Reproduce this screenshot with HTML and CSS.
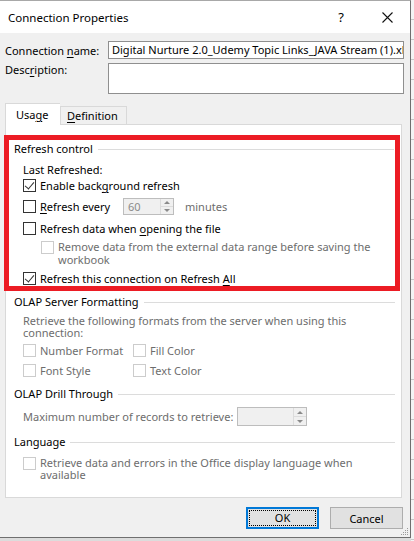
FILE: index.html
```html
<!DOCTYPE html>
<html lang="en">
<head>
    <meta charset="UTF-8">
    <title>Connection Properties</title>
    <link rel="stylesheet" href="styles.css">
</head>
<body>

<div class="screen">
    <div class="dialog">
        <div class="titlebar">
            <span class="title">Connection Properties</span>
            <span class="title-btn help">?</span>
            <span class="title-btn close">
                <svg width="11" height="11" viewBox="0 0 11 11">
                    <path d="M0.5 0.5 L10.5 10.5 M10.5 0.5 L0.5 10.5" stroke="#111" stroke-width="1.1" fill="none"/>
                </svg>
            </span>
        </div>

        <div class="body">
            <div class="field-row name-row">
                <label class="field-label">Connection <u>n</u>ame:</label>
                <div class="textbox">Digital Nurture 2.0_Udemy Topic Links_JAVA Stream (1).xlsx</div>
            </div>
            <div class="field-row desc-row">
                <label class="field-label">Desc<u>r</u>iption:</label>
                <div class="textarea"></div>
            </div>

            <div class="tabs">
                <div class="tab active">Usa<u>g</u>e</div>
                <div class="tab"><u>D</u>efinition</div>
            </div>

            <div class="panel">
                <!-- refresh options, boxed in red -->
                <div class="highlight">
                    <div class="group-title first"><span>Refresh control</span></div>
                    <div class="sub">
                        <div class="note last-refreshed">Last Refreshed:</div>
                        <div class="row r-bg">
                            <span class="check checked"></span>
                            <span>Enable back<u>g</u>round refresh</span>
                        </div>
                        <div class="row r-every">
                            <span class="check"></span>
                            <span class="every-label"><u>R</u>efresh every</span>
                            <div class="spinner small">
                                <span class="spin-value">60</span>
                                <span class="spin-arrows"><i class="up"></i><i class="down"></i></span>
                            </div>
                            <span class="muted minutes">minutes</span>
                        </div>
                        <div class="row r-open">
                            <span class="check"></span>
                            <span>Refresh data when <u>o</u>pening the file</span>
                        </div>
                        <div class="row wrap r-remove muted">
                            <span class="check disabled"></span>
                            <span>Remove data from the external data range before saving the<br>workbook</span>
                        </div>
                        <div class="row r-all">
                            <span class="check checked"></span>
                            <span>Refresh this connection on Refresh <u>A</u>ll</span>
                        </div>
                    </div>
                </div>

                <div class="group olap">
                    <div class="group-title"><span>OLAP Server Formatting</span></div>
                    <div class="sub">
                        <div class="note muted olap-note">Retrieve the following formats from the server when using this<br>connection:</div>
                        <div class="format-grid muted">
                            <div class="row"><span class="check disabled"></span><span>Number Format</span></div>
                            <div class="row"><span class="check disabled"></span><span>Fill Color</span></div>
                            <div class="row"><span class="check disabled"></span><span>Font Style</span></div>
                            <div class="row"><span class="check disabled"></span><span>Text Color</span></div>
                        </div>
                    </div>
                </div>

                <div class="group drill">
                    <div class="group-title"><span>OLAP Drill Through</span></div>
                    <div class="sub">
                        <div class="row r-max muted">
                            <span class="max-label">Maximum number of records to retrieve:</span>
                            <div class="spinner large">
                                <span class="spin-value"></span>
                                <span class="spin-arrows"><i class="up"></i><i class="down"></i></span>
                            </div>
                        </div>
                    </div>
                </div>

                <div class="group language">
                    <div class="group-title"><span>Language</span></div>
                    <div class="sub">
                        <div class="row wrap r-lang muted">
                            <span class="check disabled"></span>
                            <span>Retrieve data and errors in the Office display language when<br>available</span>
                        </div>
                    </div>
                </div>
            </div>

            <div class="buttons">
                <button class="btn default"><span>OK</span></button>
                <button class="btn">Cancel</button>
            </div>
        </div>

        <svg class="grip" width="8" height="8" viewBox="0 0 8 8">
            <rect x="6" y="0" width="1" height="1" fill="#9a9a9a"/>
            <rect x="4" y="2" width="1" height="1" fill="#9a9a9a"/>
            <rect x="6" y="2" width="1" height="1" fill="#9a9a9a"/>
            <rect x="2" y="4" width="1" height="1" fill="#9a9a9a"/>
            <rect x="4" y="4" width="1" height="1" fill="#9a9a9a"/>
            <rect x="6" y="4" width="1" height="1" fill="#9a9a9a"/>
            <rect x="0" y="6" width="1" height="1" fill="#9a9a9a"/>
            <rect x="2" y="6" width="1" height="1" fill="#9a9a9a"/>
            <rect x="4" y="6" width="1" height="1" fill="#9a9a9a"/>
            <rect x="6" y="6" width="1" height="1" fill="#9a9a9a"/>
        </svg>
    </div>
    <div class="sheet"></div>
</div>

</body>
</html>
```

FILE: styles.css
```css
* {
    box-sizing: border-box;
}

body {
    margin: 0;
    font-family: "Noto Sans", "Open Sans", sans-serif;
    font-size: 11px;
    color: #000;
}

u {
    text-decoration-thickness: 1px;
    text-underline-offset: 2px;
}

.screen {
    display: flex;
    width: 414px;
    height: 541px;
    background: #dcdcdc;
    overflow: hidden;
}

.dialog {
    position: relative;
    width: 411px;
    height: 538px;
    flex: none;
    background: #f0f0f0;
    border-top: 1px solid #a8a8a8;
    border-right: 1px solid #6f6f6f;
    border-bottom: 1px solid #6f6f6f;
}

.sheet {
    flex: 1;
    background: repeating-linear-gradient(to bottom, #f4f4f4 0 19px, #c8c8c8 19px 20px);
}

/* title bar */
.titlebar {
    height: 32px;
    background: #fff;
    display: flex;
    align-items: center;
}

.title {
    flex: 1;
    padding-left: 8px;
    font-size: 11.5px;
}

.title-btn {
    width: 46px;
    height: 32px;
    display: flex;
    align-items: center;
    justify-content: center;
}

.help {
    font-size: 13px;
    margin-right: 0;
}

/* connection fields */
.body {
    padding: 0 6px 0 5px;
}

.field-row {
    display: flex;
}

.field-label {
    width: 103px;
    flex: none;
}

.name-row {
    margin-top: 8px;
    height: 18px;
    align-items: center;
}

.textbox {
    flex: 1;
    height: 18px;
    background: #fff;
    border: 1px solid #8f8f8f;
    padding: 0 3px;
    line-height: 16px;
    white-space: nowrap;
    overflow: hidden;
}

.desc-row {
    margin-top: 4px;
}

.desc-row .field-label {
    line-height: 14px;
}

.textarea {
    flex: 1;
    height: 31px;
    background: #fff;
    border: 1px solid #8f8f8f;
}

/* tabs */
.tabs {
    margin-top: 9px;
    height: 21px;
    display: flex;
    align-items: flex-end;
}

.tab {
    height: 18px;
    padding: 0 7px 0 7px;
    border: 1px solid #d9d9d9;
    border-bottom: none;
    line-height: 18px;
    background: #f0f0f0;
}

.tab.active {
    position: relative;
    z-index: 1;
    width: 55px;
    height: 22px;
    margin-bottom: -1px;
    padding-left: 10px;
    background: #fff;
    line-height: 21px;
    border-right: none;
}

.tab.active + .tab {
    width: 67px;
    padding-left: 6px;
}

.panel {
    height: 374px;
    margin-right: 2px;
    background: #fff;
    border: 1px solid #d9d9d9;
}

/* group headers with the rule after the caption */
.group-title {
    display: flex;
    align-items: center;
    height: 15px;
    line-height: 15px;
}

.group-title::after {
    content: "";
    flex: 1;
    height: 1px;
    margin-left: 5px;
    margin-top: 1px;
    background: #dcdcdc;
}

.sub {
    margin-left: 9px;
}

.note {
    line-height: 15px;
}

.muted {
    color: #6d6d6d;
}

.row {
    display: flex;
    align-items: center;
    height: 15px;
    line-height: 15px;
    white-space: nowrap;
}

.row.wrap {
    align-items: flex-start;
    height: auto;
}

.check {
    position: relative;
    width: 13px;
    height: 13px;
    flex: none;
    margin-right: 4px;
    background: #fff;
    border: 1px solid #333;
}

.check.disabled {
    border-color: #cccccc;
}

.check.checked::after {
    content: "";
    position: absolute;
    left: 3px;
    top: 0px;
    width: 4px;
    height: 8px;
    border-right: 1px solid #333;
    border-bottom: 1px solid #333;
    transform: rotate(40deg);
}

/* refresh control box */
.highlight {
    margin: 10px 1px 0 -2px;
    height: 156px;
    border: 5px solid #ec1c24;
    padding: 0 1px 0 5px;
}

.group-title.first {
    margin-top: 1px;
}

.last-refreshed {
    margin-top: 6px;
}

.r-bg {
    margin-top: 1px;
}

.r-every {
    margin-top: 5px;
    height: 17px;
}

.every-label {
    width: 83px;
}

.spinner {
    display: flex;
    background: #f0f0f0;
    border: 1px solid #bdbdbd;
}

.spinner.small {
    width: 51px;
    height: 17px;
}

.spinner.large {
    width: 70px;
    height: 19px;
}

.spin-value {
    flex: 1;
    padding-left: 4px;
    color: #8a8a8a;
    line-height: 15px;
}

.spin-arrows {
    width: 13px;
    display: flex;
    flex-direction: column;
    border-left: 1px solid #dcdcdc;
}

.spin-arrows i {
    flex: 1;
    display: flex;
    align-items: center;
    justify-content: center;
}

.spin-arrows i + i {
    border-top: 1px solid #dcdcdc;
}

.spin-arrows i::before {
    content: "";
    border-left: 3px solid transparent;
    border-right: 3px solid transparent;
}

.spin-arrows .up::before {
    border-bottom: 3px solid #8a8a8a;
}

.spin-arrows .down::before {
    border-top: 3px solid #8a8a8a;
}

.minutes {
    margin-left: 11px;
}

.r-open {
    margin-top: 6px;
}

.r-remove {
    margin-top: 4px;
    margin-left: 18px;
    line-height: 13px;
}

.r-remove .check {
    margin-top: 1px;
}

.r-all {
    margin-top: 5px;
}

/* lower groups */
.group {
    padding: 0 6px 0 8px;
}

.olap {
    margin-top: 3px;
}

.olap-note {
    margin-top: 6px;
    line-height: 12px;
}

.format-grid {
    display: grid;
    grid-template-columns: 110px auto;
    row-gap: 5px;
    margin-top: 4px;
}

.drill {
    margin-top: 8px;
}

.r-max {
    margin-top: 6px;
    height: 19px;
}

.max-label {
    width: 214px;
}

.language {
    margin-top: 8px;
}

.r-lang {
    margin-top: 8px;
    line-height: 12px;
}

/* dialog buttons */
.buttons {
    display: flex;
    justify-content: flex-end;
    gap: 11px;
    margin-top: 9px;
    padding-right: 1px;
}

.btn {
    width: 73px;
    height: 22px;
    padding: 0;
    font-family: inherit;
    font-size: 11px;
    color: #000;
    background: #e1e1e1;
    border: 1px solid #adadad;
}

.btn.default {
    border: 2px solid #0078d7;
    padding: 1px;
}

.btn.default span {
    display: block;
    height: 100%;
    line-height: 14px;
    border: 1px dotted #000;
}

.grip {
    position: absolute;
    right: 1px;
    bottom: 1px;
}
```
